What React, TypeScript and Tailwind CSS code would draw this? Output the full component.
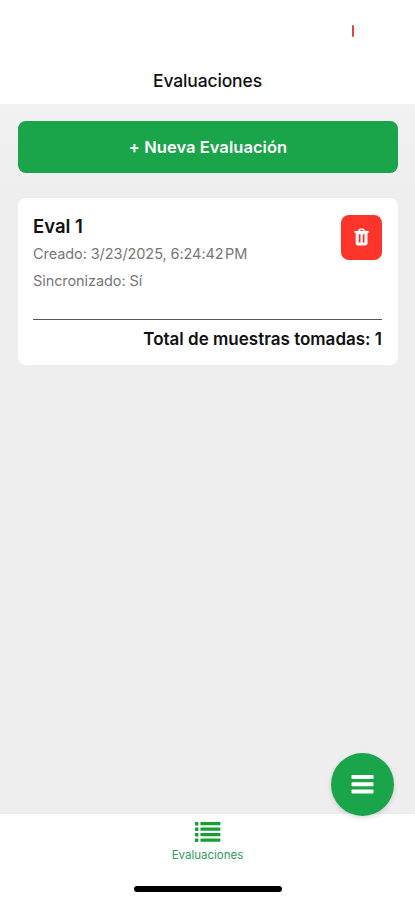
function TrashIcon() {
  return (
    <svg className="-mt-px" width="16" height="18" viewBox="0 0 16 18" fill="none">
      <path d="M5.2 3.4V2.2q0-1 1-1h2.8q1 0 1 1v1.2" stroke="#fff" strokeWidth="1.5" />
      <path d="M0.4 3.9h14.4" stroke="#fff" strokeWidth="2" />
      <path d="M1.7 4h11.8v11.2q0 2.2-2.2 2.2H3.9q-2.2 0-2.2-2.2z" fill="#fff" />
      <path d="M5.6 6.2v8.2M9.6 6.2v8.2" stroke="#fc3429" strokeWidth="1.8" />
    </svg>
  );
}

function ListIcon() {
  return (
    <svg width="27" height="22" viewBox="0 0 27 22" fill="#16a034">
      {[1, 6.5, 12, 17.5].map((y) => (
        <g key={y}>
          <rect x="1" y={y} width="3.4" height="3.4" rx="0.6" />
          <rect x="6.4" y={y} width="20" height="3.2" rx="0.4" />
        </g>
      ))}
    </svg>
  );
}

export default function App() {
  return (
    <div className="relative flex h-[900px] w-[415px] flex-col overflow-hidden bg-[#eeeeee] font-['Inter',sans-serif] text-[#111111]">
      <header className="flex h-[104px] shrink-0 flex-col bg-white">
        <div className="flex h-[62px] items-center justify-end pr-[61px]">
          <span className="h-3 w-[2px] rounded-full bg-[#e0483b]" />
        </div>
        <h1 className="text-center text-[17.5px] leading-[38px] font-medium tracking-[-0.15px]">Evaluaciones</h1>
      </header>

      <main className="flex flex-1 flex-col bg-linear-to-b from-[#f2f2f2] to-[#eeeeee] to-[90px] pt-[17px] pr-[17px] pl-[18px]">
        <button className="h-[52px] w-full shrink-0 rounded-lg bg-[#1aa54a] text-[16.5px] font-semibold tracking-[0.05px] text-white">
          + Nueva Evaluación
        </button>
        <section className="mt-[25px] flex h-[167px] shrink-0 flex-col rounded-lg bg-white pt-[17px] pr-4 pl-[15px]">
          <div className="flex h-[105px] justify-between border-b border-[#555555]">
            <div>
              <h2 className="text-[18.5px] leading-[22px] font-semibold">Eval 1</h2>
              <p className="mt-[4px] text-[14.5px] leading-[26px] tracking-[-0.08px] text-[#777777]">
                Creado: 3/23/2025, 6:24:42<span className="ml-[1.5px]">PM</span>
              </p>
              <p className="mt-px text-[14.5px] leading-[26px] tracking-[-0.08px] text-[#777777]">Sincronizado: Sí</p>
            </div>
            <button aria-label="Eliminar" className="flex h-[45px] w-[41px] items-center justify-center rounded-lg bg-[#fc3429]">
              <TrashIcon />
            </button>
          </div>
          <p className="mt-[8px] text-right text-[17px] leading-[22px] font-semibold">Total de muestras tomadas: 1</p>
        </section>
      </main>

      <nav className="flex h-[86px] shrink-0 flex-col items-center bg-white pt-[7px] text-[#2c9b59]">
        <ListIcon />
        <span className="mt-[4px] text-[11.5px] leading-4">Evaluaciones</span>
        <span className="mt-[23px] h-[6px] w-[148px] rounded-full bg-black" />
      </nav>

      <button aria-label="Menú" className="absolute top-[753px] left-[331px] flex size-[63px] items-center justify-center rounded-full bg-[#1aa54a] shadow-[0_2px_5px_rgba(0,0,0,0.15)]">
        <svg width="23" height="19" viewBox="0 0 23 19" fill="#fff">
          <rect x="0.5" y="0" width="22" height="4" rx="0.8" />
          <rect x="0.5" y="7.2" width="22" height="4" rx="0.8" />
          <rect x="0.5" y="14.4" width="22" height="4" rx="0.8" />
        </svg>
      </button>
    </div>
  );
}
